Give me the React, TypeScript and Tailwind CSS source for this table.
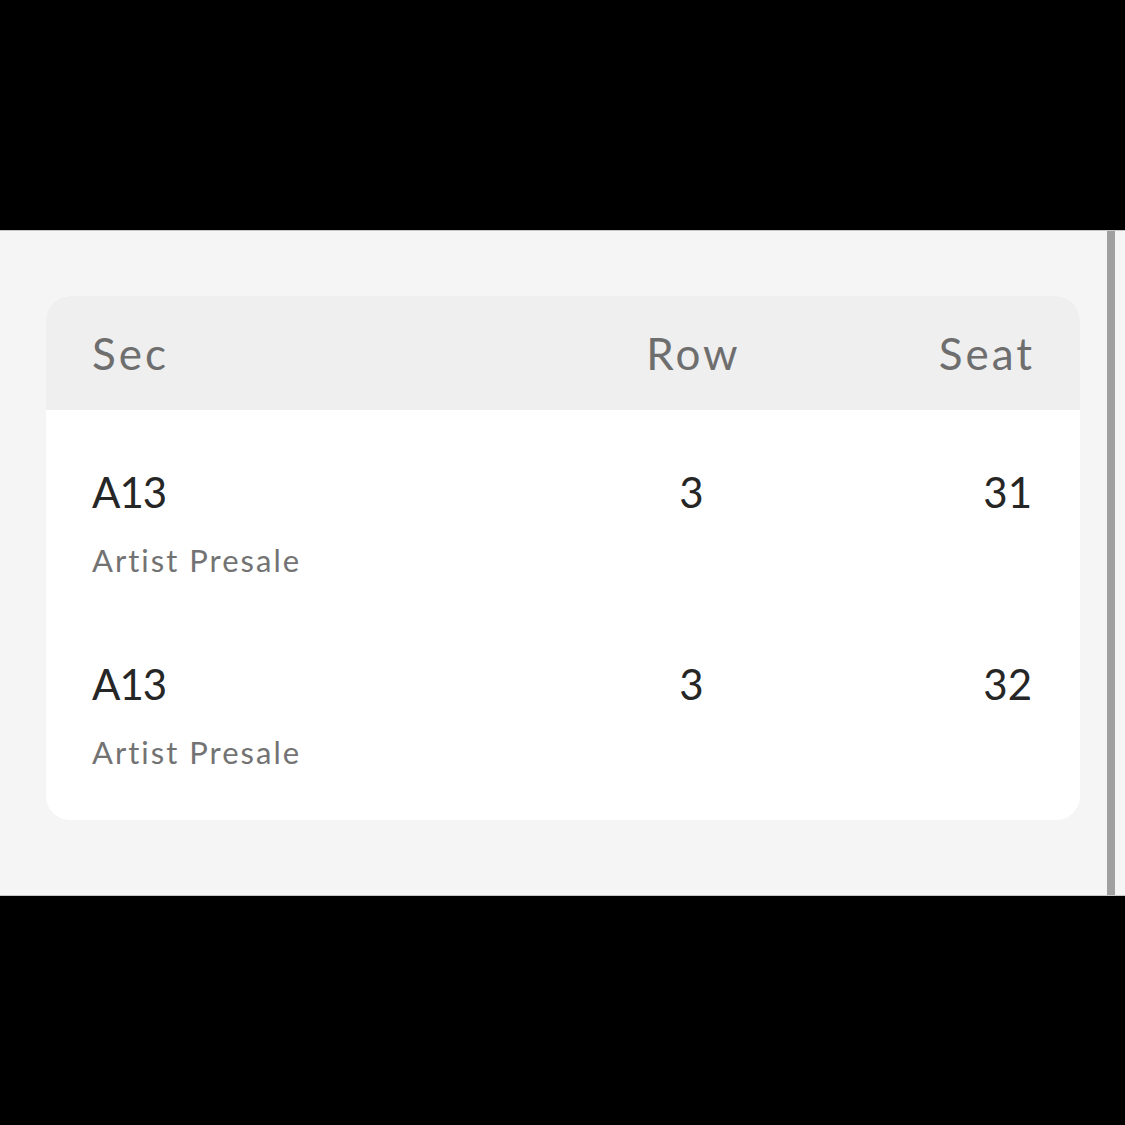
const TICKETS = [
  { sec: "A13", row: "3", seat: "31", label: "Artist Presale" },
  { sec: "A13", row: "3", seat: "32", label: "Artist Presale" },
];

export default function App() {
  return (
    <div className="flex h-[1125px] w-[1125px] flex-col bg-black font-['Lato',sans-serif]">
      <div className="h-[230px] shrink-0" />

      <div className="flex h-[666px] shrink-0 border-y border-[#c8c8c8] bg-[#f5f5f5]">
        <div className="flex-1 pl-[46px] pr-[27px] pt-[65px]">
          <div className="overflow-hidden rounded-[24px] bg-white">
            {/* header */}
            <div className="grid h-[114px] grid-cols-[1fr_227px_227px] items-center bg-[#efefef] px-[46px] pr-[48px] text-[44px] tracking-[3px] text-[#6e6e6e]">
              <span>Sec</span>
              <span className="pl-[4px] text-center">Row</span>
              <span className="-mr-[3px] text-right">Seat</span>
            </div>

            {/* rows */}
            <div className="flex flex-col gap-[80px] px-[46px] pr-[48px] pb-[48px] pt-[58px]">
              {TICKETS.map((t) => (
                <div key={t.seat}>
                  <div className="grid grid-cols-[1fr_227px_227px] text-[42px] leading-[48px] text-[#262626]">
                    <span className="tracking-[-1px]">{t.sec}</span>
                    <span className="text-center">{t.row}</span>
                    <span className="text-right">{t.seat}</span>
                  </div>
                  <div className="mt-6 text-[31px] leading-[40px] tracking-[2px] text-[#737373]">{t.label}</div>
                </div>
              ))}
            </div>
          </div>
        </div>
        <div className="w-[8px] bg-[#a0a0a0]" />
        <div className="w-[10px]" />
      </div>
    </div>
  );
}
